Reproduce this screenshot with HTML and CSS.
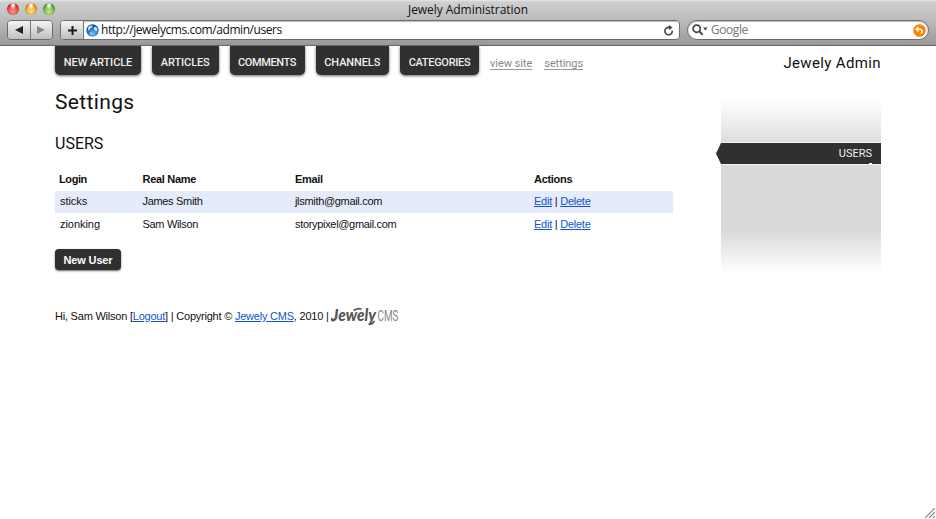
FILE: index.html
```html
<!DOCTYPE html>
<html lang="en">
<head>
<meta charset="utf-8">
<title>Jewely Administration</title>
<link rel="stylesheet" href="styles.css">
</head>
<body>
<div class="window">
  <header class="chrome">
    <div class="titlebar">
      <div class="lights"><i class="light red"></i><i class="light amber"></i><i class="light green"></i></div>
      <span class="window-title">Jewely Administration</span>
    </div>
    <div class="toolbar">
      <div class="history">
        <button class="tool" aria-label="Back"><svg width="8" height="8" viewBox="0 0 8 8"><path d="M8 0v8L0 4z" fill="#222"/></svg></button>
        <button class="tool" aria-label="Forward"><svg width="8" height="8" viewBox="0 0 8 8"><path d="M0 0v8l8-4z" fill="#888"/></svg></button>
      </div>
      <div class="address">
        <button class="tool add" aria-label="Add bookmark"><svg width="9" height="9" viewBox="0 0 9 9"><path d="M4.5 0v9M0 4.5h9" stroke="#1a1a1a" stroke-width="2"/></svg></button>
        <div class="url">
          <svg class="globe" width="13" height="13" viewBox="0 0 13 13"><defs><radialGradient id="sea" cx=".55" cy=".75" r=".75"><stop offset="0" stop-color="#69c0f5"/><stop offset=".55" stop-color="#2a70c8"/><stop offset="1" stop-color="#174588"/></radialGradient></defs><circle cx="6.5" cy="6.5" r="6.2" fill="url(#sea)"/><path d="M2 3.5Q4 .8 6.5 1.6L5.8 3.8 4 4.6 3.4 6.2 2 6zM7.8 3.6l2.2-.8 1.4 2-.4 2.6-1.8-.8L8 5.5z" fill="#e4f4ff" opacity=".85"/><path d="M4 8l2 .8.3 1.6-1 .9L4 9.8z" fill="#d7efff" opacity=".6"/></svg>
          <span class="url-text">http://jewelycms.com/admin/users</span>
          <svg class="reload" width="11" height="11" viewBox="0 0 11 11"><path d="M9.2 5.6A3.7 3.7 0 1 1 5.5 2.4H7" fill="none" stroke="#444" stroke-width="1.6"/><path d="M5.8 0l3.8 2.6-3.8 2.6z" fill="#444"/></svg>
        </div>
      </div>
      <div class="search">
        <svg width="16" height="12" viewBox="0 0 16 12"><circle cx="4.7" cy="4.7" r="3.6" fill="none" stroke="#444" stroke-width="1.7"/><path d="M7.4 7.4l3.2 3.4" stroke="#444" stroke-width="2"/><path d="M11 3.5h4.6l-2.3 3z" fill="#444"/></svg>
        <span class="placeholder">Google</span>
        <svg width="13" height="13" viewBox="0 0 13 13"><circle cx="6.5" cy="6.5" r="6.3" fill="#ff8400"/><path d="M4.5 5.2h2.6a2.1 2.1 0 0 1 .6 4.1" fill="none" stroke="#fff" stroke-width="1.6"/><path d="M5.5 2.2v6l-3.4-3z" fill="#fff"/></svg>
      </div>
    </div>
  </header>

  <div class="page">
    <nav class="nav">
      <a class="tab t1">NEW ARTICLE</a>
      <a class="tab t2">ARTICLES</a>
      <a class="tab t3">COMMENTS</a>
      <a class="tab t4">CHANNELS</a>
      <a class="tab t5">CATEGORIES</a>
      <a class="minor">view site</a>
      <a class="minor">settings</a>
      <span class="brand">Jewely Admin</span>
    </nav>
    <div class="columns">
      <main class="main">
        <h1>Settings</h1>
        <h2>USERS</h2>
        <div class="table">
          <div class="row head"><span>Login</span><span>Real Name</span><span>Email</span><span>Actions</span></div>
          <div class="row shaded"><span>sticks</span><span>James Smith</span><span>jlsmith@gmail.com</span><span class="actions"><a>Edit</a> | <a>Delete</a></span></div>
          <div class="row"><span>zionking</span><span>Sam Wilson</span><span>storypixel@gmail.com</span><span class="actions"><a>Edit</a> | <a>Delete</a></span></div>
        </div>
        <button class="new-user">New User</button>
        <footer class="footer">
          <span class="legal">Hi, Sam Wilson [<a>Logout</a>] | Copyright © <a>Jewely CMS</a>, 2010 |</span>
          <svg class="logo" width="69" height="20" viewBox="0 0 69 20"><text class="logo-script" x="1" y="15" textLength="44" lengthAdjust="spacingAndGlyphs">Jewely</text><path d="M3 14.5Q0 15.5 .8 12.5M23 4.2q4-2.4 7-1.2M38 18.3q4 .3 5-3" fill="none" stroke="#555" stroke-width="1.6" stroke-linecap="round"/><text class="logo-cms" x="46.5" y="15" textLength="21" lengthAdjust="spacingAndGlyphs">CMS</text></svg>
        </footer>
      </main>
      <aside class="side">
        <div class="fade-top"></div>
        <a class="current"><svg class="point" width="5" height="21" viewBox="0 0 5 21"><path d="M5 0v21L0 10.5z" fill="#303030"/></svg>USERS<i class="speck"></i></a>
        <div class="fade-bottom"></div>
      </aside>
    </div>
  </div>
  <svg class="grip" width="10" height="10" viewBox="0 0 10 10"><path d="M0 10L10 0M4 10l6-6M8 10l2-2" stroke="#888" stroke-width="1.2"/></svg>
</div>
</body>
</html>
```
FILE: styles.css
```css
* { box-sizing: border-box; }
body { margin: 0; background: #fff; color: #111; font: 11px/14px "Liberation Sans", sans-serif; }
button { margin: 0; padding: 0; font: inherit; }
.window { position: relative; width: 936px; height: 519px; overflow: hidden; }

.chrome { height: 46px; background: linear-gradient(#e8e8e8 0, #cfcfcf 2px, #b9b9b9 22px, #989898 45px); border-bottom: 1px solid #666; font-family: "Open Sans", sans-serif; }
.titlebar { position: relative; height: 20px; display: flex; justify-content: center; }
.window-title { font-size: 12px; line-height: 19px; font-weight: 500; letter-spacing: -.05px; }
.lights { position: absolute; left: 7px; top: 3px; display: flex; gap: 6px; }
.light { width: 12px; height: 12px; border-radius: 50%; box-shadow: inset 0 0 1px 1px rgba(0,0,0,.25); }
.red { background: radial-gradient(ellipse at 50% 18%, #fff 0 8%, transparent 35%), radial-gradient(circle at 50% 85%, #ff9a90, #e2352f 70%); }
.amber { background: radial-gradient(ellipse at 50% 18%, #fff 0 8%, transparent 35%), radial-gradient(circle at 50% 85%, #ffe77b, #ee982c 70%); }
.green { background: radial-gradient(ellipse at 50% 18%, #fff 0 8%, transparent 35%), radial-gradient(circle at 50% 85%, #c8f08a, #62ab3a 70%); }

.toolbar { display: flex; padding: 0 7px; }
.history { display: flex; width: 46px; height: 20px; margin-right: 7px; border: 1px solid #6c6c6c; border-radius: 4px; overflow: hidden; }
.tool { flex: 1; display: flex; align-items: center; justify-content: center; border: 0; background: linear-gradient(#f4f4f4, #c0c0c0); }
.tool + .tool { border-left: 1px solid #777; }
.address { display: flex; width: 620px; height: 20px; border: 1px solid #6c6c6c; border-radius: 4px; overflow: hidden; background: #fff; }
.address .add { flex: 0 0 23px; border-right: 1px solid #777; }
.url { flex: 1; display: flex; align-items: center; padding: 0 5px 0 2px; box-shadow: inset 0 1px 1px #bbb; }
.url-text { flex: 1; margin-left: 2px; font-size: 12px; line-height: 18px; font-weight: 500; letter-spacing: -.43px; white-space: nowrap; }
.search { display: flex; align-items: center; width: 242px; height: 20px; margin-left: 7px; padding: 0 2px 0 4px; border: 1px solid #6c6c6c; border-radius: 10px; background: #fff; box-shadow: inset 0 1px 1px #bbb; }
.placeholder { flex: 1; margin-left: 3px; font-size: 12px; line-height: 18px; letter-spacing: -.45px; color: #777; }

.page { width: 826px; margin-left: 55px; }
.nav { display: flex; height: 34px; font-family: Roboto, sans-serif; }
.tab { height: 29px; margin-right: 11px; border-radius: 0 0 5px 5px; background: #303030; color: #eee; box-shadow: 0 1px 3px rgba(0,0,0,.6); text-align: center; font-size: 11px; line-height: 34px; font-weight: 500; letter-spacing: -.1px; white-space: nowrap; clip-path: inset(0 -4px -5px); }
.t1 { width: 86px; }
.t2 { width: 66.5px; }
.t3 { width: 75px; letter-spacing: -.4px; }
.t4 { width: 73.5px; }
.t5 { width: 79px; letter-spacing: -.3px; }
.minor { align-self: flex-start; height: 13px; margin: 11px 12px 0 0; border-bottom: 1px solid #999; color: #888; font-size: 11px; line-height: 13px; letter-spacing: -.05px; }
.brand { margin-left: auto; font-size: 15px; line-height: 35px; letter-spacing: .36px; }

.columns { display: flex; justify-content: space-between; }
.main { width: 618px; }
h1, h2 { margin: 0; font-family: Roboto, sans-serif; font-weight: 400; }
h1 { margin-top: 9px; font-size: 21px; line-height: 26px; letter-spacing: .35px; }
h2 { margin-top: 18px; font-size: 16px; line-height: 22px; }
.table { margin-top: 12px; }
.row { display: grid; grid-template-columns: 87.5px 152.5px 239px 1fr; align-items: center; height: 22.5px; padding-bottom: 1px; letter-spacing: -.32px; }
.row span:first-child { padding-left: 5px; letter-spacing: -.05px; }
.row .actions { letter-spacing: -.25px; }
.head { height: 23.5px; padding-bottom: 0; font-weight: 700; letter-spacing: -.3px; }
.head span:first-child { padding-left: 4px; letter-spacing: -.4px; }
.shaded { background: #e5ebfa; }
a { text-decoration: none; }
.row a, .legal a { color: #1155cc; text-decoration: underline; }
.new-user { display: block; width: 66px; height: 21px; margin-top: 13.5px; border: 0; border-radius: 4px; background: #303030; color: #fff; font-weight: 700; letter-spacing: -.15px; box-shadow: 0 1px 2px rgba(0,0,0,.6); }
.footer { display: flex; align-items: center; height: 20px; margin-top: 36px; }
.legal { letter-spacing: -.22px; }
.logo { margin-left: 2px; overflow: visible; }
.logo-script { font: italic 900 16px Lato, sans-serif; fill: #555; }
.logo-cms { font: 400 15px Roboto, sans-serif; fill: #888; }

.side { width: 160px; margin-top: 20px; }
.fade-top { height: 43px; background: linear-gradient(#fff, #ddd); border-bottom: 1px solid #f4f4f4; }
.current { position: relative; display: block; height: 22px; padding-right: 9px; background: #303030; border-bottom: 1px solid #f4f4f4; color: #eee; font: 400 11px/22px Roboto, sans-serif; text-align: right; }
.point { position: absolute; left: -5px; top: 0; }
.speck { position: absolute; right: 9px; bottom: -1px; width: 3px; height: 2px; background: #fff; }
.fade-bottom { height: 108px; background: linear-gradient(#d9d9d9 60%, #fff); }
.grip { position: absolute; right: 1px; bottom: 1px; }
```
